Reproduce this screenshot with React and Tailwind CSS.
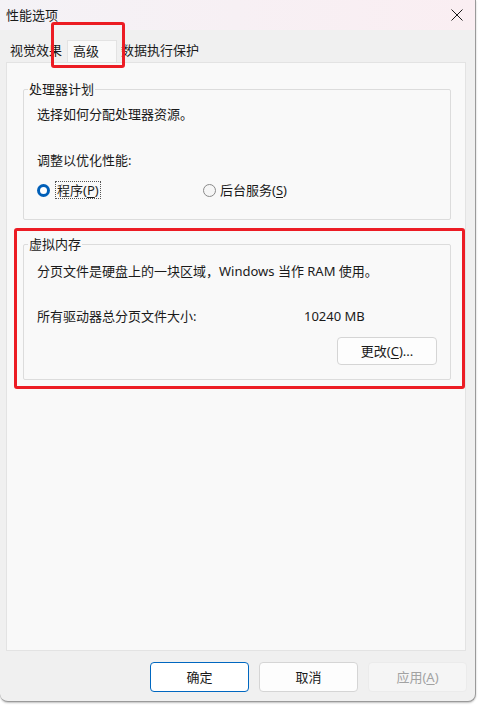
import React from 'react';

const font = { fontFamily: '"Noto Sans", "Noto Sans CJK SC", sans-serif' };

const Radio = ({ checked }) =>
  checked ? (
    <span className="w-[13px] h-[13px] rounded-full bg-[#005fb8] flex items-center justify-center shrink-0">
      <span className="w-[7px] h-[7px] rounded-full bg-white" />
    </span>
  ) : (
    <span className="w-[13px] h-[13px] rounded-full border border-[#8a8a8a] bg-[#f6f6f6] shrink-0" />
  );

const Btn = ({ children, variant }) => {
  const cls =
    variant === 'primary'
      ? 'border-[#0067c0] bg-white text-[#1a1a1a]'
      : variant === 'disabled'
      ? 'border-[#ebebeb] bg-[#f5f5f5] text-[#a2a2a2]'
      : 'border-[#d5d5d5] bg-[#fdfdfd] text-[#1a1a1a]';
  return (
    <button className={`w-[99px] h-[30px] rounded-[4px] border text-[13px] leading-none flex items-center justify-center ${cls}`}>
      {children}
    </button>
  );
};

export default function App() {
  return (
    <div className="relative w-[478px] h-[705px] bg-white text-[13px] text-[#1a1a1a]" style={font}>
      <div className="w-[476px] h-[702px] rounded-b-[8px] border-r border-b border-[#9a9a9a] bg-[#f0f0f0] flex flex-col overflow-hidden shadow-[0_1px_2px_rgba(0,0,0,0.25)]">
        {/* 标题栏 */}
        <div className="h-[30px] shrink-0 flex items-center justify-between pl-[6px] pr-[12px] bg-gradient-to-r from-[#f4f2f6] to-[#faeef2]">
          <span className="leading-none">性能选项</span>
          <svg width="12" height="12" viewBox="0 0 12 12" className="mb-[1px]">
            <path d="M0.5 0.5 L11.5 11.5 M11.5 0.5 L0.5 11.5" stroke="#1a1a1a" strokeWidth="1" />
          </svg>
        </div>

        <div className="flex-1 flex flex-col px-[6px]">
          {/* 选项卡 */}
          <div className="flex items-end h-[32px] pt-[10px]">
            <div className="h-[22px] flex items-center pl-[4px] pr-[5px]">视觉效果</div>
            <div className="h-[22px] w-[50px] flex items-center pl-[5px] bg-[#f9f9f9] border-t border-x border-[#e3e3e3]">高级</div>
            <div className="h-[22px] flex items-center pl-[4px]">数据执行保护</div>
          </div>

          {/* 面板 */}
          <div className="h-[589px] w-[460px] border border-[#e3e3e3] bg-[#f9f9f9] pt-[18px] pl-[16px] pr-[14px]">
            <fieldset className="border border-[#dcdcdc] rounded-[2px] pl-[13px] pb-[20px] m-0">
              <legend className="leading-[17px] px-[1px] -ml-[9px]">处理器计划</legend>
              <div className="leading-[17px] mt-[8px]">选择如何分配处理器资源。</div>
              <div className="leading-[17px] mt-[29px]">调整以优化性能:</div>
              <div className="flex items-center mt-[12px] h-[18px]">
                <div className="w-[166px] flex items-center gap-[5px]">
                  <Radio checked />
                  <span className="leading-[16px] px-[1px] border border-dotted border-[#555]">
                    程序(<span className="underline underline-offset-2">P</span>)
                  </span>
                </div>
                <div className="flex items-center gap-[4px]">
                  <Radio />
                  <span className="leading-[16px]">
                    后台服务(<span className="underline underline-offset-2">S</span>)
                  </span>
                </div>
              </div>
            </fieldset>

            <fieldset className="border border-[#dcdcdc] rounded-[2px] pl-[13px] pr-[13px] pb-[14px] mt-[16px] m-0">
              <legend className="leading-[17px] px-[1px] -ml-[9px]">虚拟内存</legend>
              <div className="leading-[17px] mt-[10px]">分页文件是硬盘上的一块区域，Windows 当作 RAM 使用。</div>
              <div className="flex leading-[17px] mt-[28px]">
                <span className="w-[267px]">所有驱动器总分页文件大小:</span>
                <span>10240 MB</span>
              </div>
              <div className="flex justify-end mt-[12px]">
                <button className="w-[100px] h-[28px] rounded-[4px] border border-[#d5d5d5] bg-[#fdfdfd] leading-none">
                  更改(<span className="underline underline-offset-2">C</span>)...
                </button>
              </div>
            </fieldset>
          </div>

          {/* 底部按钮 */}
          <div className="flex justify-end gap-[10px] pr-[2px] mt-[11px]">
            <Btn variant="primary">确定</Btn>
            <Btn>取消</Btn>
            <Btn variant="disabled">
              <span>
                应用(<span className="underline underline-offset-2">A</span>)
              </span>
            </Btn>
          </div>
        </div>
      </div>

      {/* 红色标注框 */}
      <div className="absolute left-[51px] top-[22px] w-[74px] h-[46px] border-[3px] border-[#ec1c24] rounded-[3px] pointer-events-none" />
      <div className="absolute left-[14px] top-[228px] w-[451px] h-[161px] border-[3px] border-[#ec1c24] rounded-[3px] pointer-events-none" />
    </div>
  );
}
